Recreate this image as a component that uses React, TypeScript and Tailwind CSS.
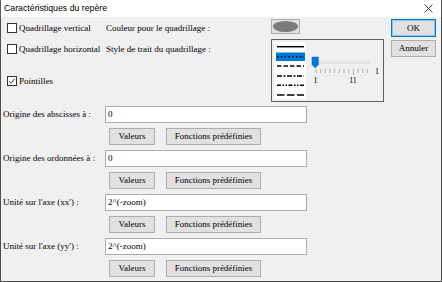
import React from "react";

function Check({ checked }: { checked?: boolean }) {
  return (
    <span className="w-[10px] h-[10px] border border-[#333333] bg-white flex items-center justify-center shrink-0">
      {checked && (
        <svg width="8" height="8" viewBox="0 0 8 8">
          <path d="M1 4.2 L3 6.2 L7 1.6" fill="none" stroke="#222" strokeWidth="0.9" />
        </svg>
      )}
    </span>
  );
}

function Btn({ w, children }: { w: string; children: React.ReactNode }) {
  return (
    <div
      className={`${w} h-[17px] border border-[#adadad] bg-[#e1e1e1] flex items-center justify-center leading-none`}
    >
      {children}
    </div>
  );
}

function InputRow({ label, value }: { label: string; value: string }) {
  return (
    <>
      <div className="flex items-center h-[17px]">
        <div className="w-[104px] pl-[2px] leading-none">{label}</div>
        <div className="w-[202px] h-[17px] border border-[#adadad] bg-white flex items-center pl-[2px] leading-none">
          {value}
        </div>
      </div>
      <div className="flex items-center h-[17px] pl-[108px] gap-[11px]">
        <Btn w="w-[46px]">Valeurs</Btn>
        <Btn w="w-[95px]">Fonctions prédéfinies</Btn>
      </div>
    </>
  );
}

function LineList() {
  const x1 = 3;
  const x2 = 30;
  return (
    <svg width="32" height="57" className="shrink-0 bg-white">
      <rect x="2" y="10.5" width="29" height="8.5" fill="#0078d7" />
      <line x1={x1} y1="4.7" x2={x2} y2="4.7" stroke="#000" strokeWidth="1.5" />
      <line x1={x1} y1="14.7" x2={x2} y2="14.7" stroke="#000" strokeWidth="1.5" strokeDasharray="1.5 2.3" />
      <line x1={x1} y1="24" x2={x2} y2="24" stroke="#000" strokeWidth="1.5" strokeDasharray="4.5 2" />
      <line x1={x1} y1="34" x2={x2} y2="34" stroke="#000" strokeWidth="1.5" strokeDasharray="5 1.5 2 1.5" />
      <line x1={x1} y1="43.3" x2={x2} y2="43.3" stroke="#000" strokeWidth="1.5" strokeDasharray="4 1.5 1.5 1.5 1.5 1.5" />
      <line x1={x1} y1="53" x2={x2} y2="53" stroke="#000" strokeWidth="1.5" strokeDasharray="7.5 2.5" />
    </svg>
  );
}

function Slider() {
  const ticks = Array.from({ length: 12 }, (_, i) => i);
  return (
    <svg width="76" height="57" className="shrink-0">
      <rect x="7" y="19" width="56" height="2.5" fill="#e7e7e7" stroke="#d9d9d9" strokeWidth="0.5" />
      {ticks.map((i) => (
        <line
          key={i}
          x1={10 + i * 4.67}
          x2={10 + i * 4.67}
          y1="27"
          y2={i === 8 ? 33 : 31}
          stroke="#9a9a9a"
          strokeWidth="0.8"
        />
      ))}
      <path d="M5.7 14.7 H12.7 V22.5 L9.2 26.3 L5.7 22.5 Z" fill="#0078d7" />
      <text x="71" y="31.5" fontSize="8" textAnchor="middle" fontFamily="'Liberation Serif', serif" fill="#000">
        1
      </text>
      <text x="9.5" y="41" fontSize="8" textAnchor="middle" fontFamily="'Liberation Serif', serif" fill="#000">
        1
      </text>
      <text x="47" y="41" fontSize="8" textAnchor="middle" fontFamily="'Liberation Serif', serif" fill="#000">
        11
      </text>
    </svg>
  );
}

export default function App() {
  return (
    <div className="w-[442px] h-[282px] flex flex-col bg-white text-black overflow-hidden">
      <div className="h-[17px] shrink-0 flex items-center justify-between pl-[3px] pr-[8px] bg-white border-x border-[#5a5a5a]">
        <span className="font-['Segoe_UI','Liberation_Sans',sans-serif] text-[8.75px] leading-none">
          Caractéristiques du repère
        </span>
        <svg width="9" height="9" viewBox="0 0 9 9">
          <path d="M0.5 0.5 L8.5 8.5 M8.5 0.5 L0.5 8.5" stroke="#111" strokeWidth="0.8" />
        </svg>
      </div>
      <div className="flex-1 flex flex-col bg-[#f0f0f0] border-x border-b border-[#4f4f4f] font-['Liberation_Serif','Times_New_Roman',serif] text-[9px]">
        <div className="flex h-[85px]">
          <div className="w-[105px] flex flex-col pl-[6px] pt-[4px]">
            <div className="h-[14px] flex items-center gap-[2px]">
              <Check />
              <span className="leading-none">Quadrillage vertical</span>
            </div>
            <div className="h-[14px] mt-[7px] flex items-center gap-[2px]">
              <Check />
              <span className="leading-none whitespace-nowrap">Quadrillage horizontal</span>
            </div>
            <div className="h-[14px] mt-[18px] flex items-center gap-[2px]">
              <Check checked />
              <span className="leading-none">Pointilles</span>
            </div>
          </div>
          <div className="w-[165px] flex flex-col pt-[4px]">
            <div className="h-[14px] flex items-center leading-none">Couleur pour le quadrillage :</div>
            <div className="h-[14px] mt-[7px] flex items-center leading-none">Style de trait du quadrillage :</div>
          </div>
          <div className="w-[113px] flex flex-col pt-[2px]">
            <div className="w-[29px] h-[15px] border border-[#adadad] bg-[#e1e1e1] flex items-center justify-center">
              <div className="w-[25px] h-[11px] rounded-[50%] bg-[#7b7b7b]" />
            </div>
            <div className="mt-[5px] h-[63px] w-[113px] border border-[#5f5f5f] flex items-start pl-[2px] pt-[2px]">
              <LineList />
              <Slider />
            </div>
          </div>
          <div className="w-[45px] ml-[7px] flex flex-col pt-[2px]">
            <div className="h-[18px] border border-[#0078d7] shadow-[inset_0_0_0_1px_#8fc0ec] bg-[#e1e1e1] flex items-center justify-center leading-none">
              OK
            </div>
            <div className="mt-[3px] h-[17px] border border-[#adadad] bg-[#e1e1e1] flex items-center justify-center leading-none">
              Annuler
            </div>
          </div>
        </div>
        <div className="mt-[4px] flex flex-col gap-[5px]">
          <InputRow label="Origine des abscisses à :" value="0" />
          <InputRow label="Origine des ordonnées à :" value="0" />
          <InputRow label="Unité sur l'axe (xx') :" value="2^(-zoom)" />
          <InputRow label="Unité sur l'axe (yy') :" value="2^(-zoom)" />
        </div>
      </div>
    </div>
  );
}
